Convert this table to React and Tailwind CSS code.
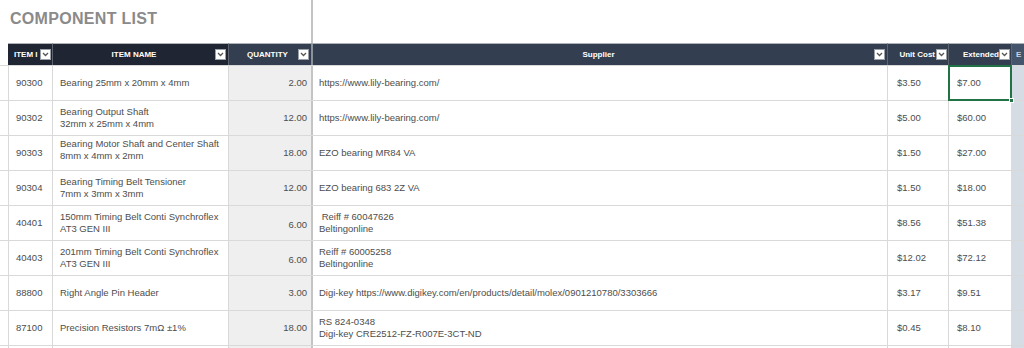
import React from 'react';

const rows = [
  { id: '90300', name: ['Bearing 25mm x 20mm x 4mm'], qty: '2.00', supplier: ['https://www.lily-bearing.com/'], unit: '$3.50', ext: '$7.00', selected: true },
  { id: '90302', name: ['Bearing Output Shaft', '32mm x 25mm x 4mm'], qty: '12.00', supplier: ['https://www.lily-bearing.com/'], unit: '$5.00', ext: '$60.00' },
  { id: '90303', name: ['Bearing Motor Shaft and Center Shaft', '8mm x 4mm x 2mm'], qty: '18.00', supplier: ['EZO bearing MR84 VA'], unit: '$1.50', ext: '$27.00', nameTop: true },
  { id: '90304', name: ['Bearing Timing Belt Tensioner', '7mm x 3mm x 3mm'], qty: '12.00', supplier: ['EZO bearing 683 2Z VA'], unit: '$1.50', ext: '$18.00' },
  { id: '40401', name: ['150mm Timing Belt Conti Synchroflex', 'AT3 GEN III'], qty: '6.00', supplier: ['\u00a0Reiff # 60047626', 'Beltingonline'], unit: '$8.56', ext: '$51.38', qtyLow: true },
  { id: '40403', name: ['201mm Timing Belt Conti Synchroflex', 'AT3 GEN III'], qty: '6.00', supplier: ['Reiff # 60005258', 'Beltingonline'], unit: '$12.02', ext: '$72.12', qtyLow: true },
  { id: '88800', name: ['Right Angle Pin Header'], qty: '3.00', supplier: ['Digi-key https://www.digikey.com/en/products/detail/molex/0901210780/3303666'], unit: '$3.17', ext: '$9.51' },
  { id: '87100', name: ['Precision Resistors 7m\u03a9 \u00b11%'], qty: '18.00', supplier: ['RS 824-0348', 'Digi-key CRE2512-FZ-R007E-3CT-ND'], unit: '$0.45', ext: '$8.10' },
];

const cols = 'grid grid-cols-[8px_44px_176px_83px_576px_61px_63px_13px]';

const Drop = () => (
  <span className="flex h-[11px] w-[11px] shrink-0 items-center justify-center border border-[#9aa0a8] bg-white">
    <svg width="7" height="5" viewBox="0 0 7 5">
      <path d="M1 1 L3.5 3.5 L6 1" fill="none" stroke="#555" strokeWidth="1.3" />
    </svg>
  </span>
);

const Lines = ({ items }) => (
  <div className="flex flex-col leading-[12px]">
    {items.map((t, i) => (
      <span key={i} className="whitespace-pre">{t}</span>
    ))}
  </div>
);

export default function App() {
  return (
    <div className="h-[348px] w-[1024px] overflow-hidden bg-white font-['Liberation_Sans',sans-serif] text-[#4d4d4d]">
      <div className="flex h-[43px]">
        <div className="w-[311px] pl-[10px] pt-[8px]">
          <h1 className="text-[16px] font-bold leading-[22px] tracking-[0.3px] text-[#8a8a8a]">COMPONENT LIST</h1>
        </div>
        <div className="flex-1 border-l-2 border-[#c4c4c4]" />
      </div>

      <div className={`${cols} h-[22px] text-[8px] font-bold text-white`}>
        <div className="bg-white" />
        <div className="flex items-center justify-between border-t border-[#aeb2b8] bg-[#1f2533] pl-[6px] pr-[1px]">
          <span className="overflow-hidden whitespace-nowrap">ITEM I</span>
          <Drop />
        </div>
        <div className="flex items-center border-l border-t border-[#5d6470] border-t-[#aeb2b8] bg-[#1f2533] pr-[2px]">
          <span className="flex-1 text-center">ITEM NAME</span>
          <Drop />
        </div>
        <div className="flex items-center border-l border-t border-[#5d6470] border-t-[#aeb2b8] bg-[#333f50] pr-[2px]">
          <span className="flex-1 pl-[8px] text-center">QUANTITY</span>
          <Drop />
        </div>
        <div className="flex items-center border-l-2 border-t border-[#8b929c] border-t-[#aeb2b8] bg-[#333f50] pr-[2px]">
          <span className="flex-1 pl-[10px] text-center">Supplier</span>
          <Drop />
        </div>
        <div className="flex items-center justify-end gap-[1px] border-l border-t border-[#5d6470] border-t-[#aeb2b8] bg-[#333f50] pr-[1px]">
          <span className="whitespace-nowrap">Unit Cost</span>
          <Drop />
        </div>
        <div className="flex items-center justify-end border-l border-t border-[#5d6470] border-t-[#aeb2b8] bg-[#333f50] pr-[1px]">
          <span className="overflow-hidden whitespace-nowrap">Extended</span>
          <Drop />
        </div>
        <div className="flex items-center overflow-hidden border-l border-t border-[#5d6470] border-t-[#aeb2b8] bg-[#44546a] pl-[4px] text-[#c9d3e0]">E</div>
      </div>

      {rows.map((r) => (
        <div key={r.id} className={`${cols} h-[35px] border-t border-[#d9d9d9] text-[9.5px]`}>
          <div />
          <div className="flex items-center border-l border-[#d9d9d9] pl-[7px]">{r.id}</div>
          <div className={`flex border-l border-[#d9d9d9] pl-[7px] ${r.nameTop ? 'items-start pt-[2px]' : 'items-center'}`}>
            <Lines items={r.name} />
          </div>
          <div className={`flex justify-end border-l border-[#d9d9d9] bg-[#efefef] pr-[4px] ${r.qtyLow ? 'items-end pb-[8px]' : 'items-center'}`}>
            {r.qty}
          </div>
          <div className="flex items-center border-l-2 border-[#c4c4c4] pl-[6px]">
            <Lines items={r.supplier} />
          </div>
          <div className="flex items-center border-l border-[#d9d9d9] pl-[9px]">{r.unit}</div>
          <div className="relative flex items-center border-l border-[#d9d9d9] pl-[8px]">
            {r.ext}
            {r.selected && (
              <>
                <span className="absolute inset-[-1px] border-2 border-[#217346]" />
                <span className="absolute bottom-[-3px] right-[-3px] h-[5px] w-[5px] border border-white bg-[#217346]" />
              </>
            )}
          </div>
          <div className="bg-[#d6dce4]" />
        </div>
      ))}

      <div className={`${cols} h-[10px] border-t border-[#d9d9d9]`}>
        <div />
        <div className="border-l border-[#d9d9d9]" />
        <div className="border-l border-[#d9d9d9]" />
        <div className="border-l border-[#d9d9d9] bg-[#efefef]" />
        <div className="border-l-2 border-[#c4c4c4]" />
        <div className="border-l border-[#d9d9d9]" />
        <div className="border-l border-[#d9d9d9]" />
        <div className="bg-[#d6dce4]" />
      </div>
    </div>
  );
}
